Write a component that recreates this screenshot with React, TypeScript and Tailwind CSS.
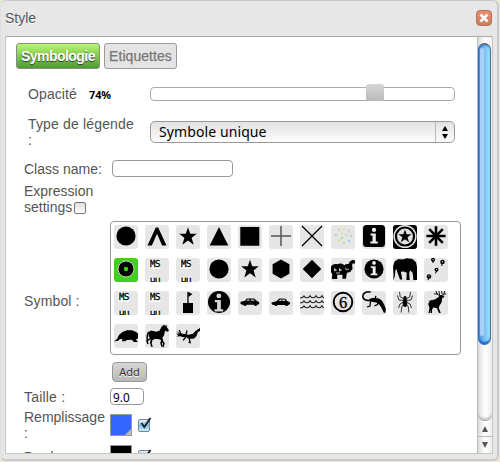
import type { ReactNode } from 'react';

const STAR = 'M12 3.5l2.1 6.1h6.3l-5.1 3.9 2 6.4-5.3-3.9-5.3 3.9 2-6.4-5.1-3.9h6.3z';

function Tile({ children, selected = false }: { children: ReactNode; selected?: boolean }) {
  return (
    <div className={`h-6 w-6 overflow-hidden rounded-[3px] ${selected ? 'bg-[#43d01c]' : 'bg-[#e6e6e6]'}`}>
      {children}
    </div>
  );
}

function Glyph({ children }: { children: ReactNode }) {
  return (
    <svg viewBox="0 0 24 24" className="block h-6 w-6" fill="#000">
      {children}
    </svg>
  );
}

function MapLabel() {
  return (
    <div className="flex flex-col items-start pt-[2px] pl-[4px] font-['DejaVu_Sans_Mono',monospace] text-[9px] leading-[9px] tracking-[-0.4px] text-black [-webkit-text-stroke:0.3px_#000]">
      <span className="h-[9px] bg-white pl-[1px]">MS</span>
      <span className="mt-[9px] h-[9px] bg-white pl-[1px]">HU</span>
    </div>
  );
}

const info = (
  <>
    <circle cx="12" cy="5.4" r="2.1" />
    <path d="M8.5 9h5.3v8h2v2H8.3v-2h2.2v-6H8.5z" />
  </>
);

const symbols: ReactNode[] = [
  <circle cx="12" cy="11" r="9.6" />,
  <path d="M2.5 20.5L10.8 2.5h2.4l8.3 18h-4.4L12 8.8 6.9 20.5z" />,
  <path d="M12 2.2l2.2 6.5h6.6l-5.2 4.1 2.1 7-5.7-4.2-5.7 4.2 2.1-7-5.2-4.1h6.6z" />,
  <path d="M12 2L21.3 20.5H2.7z" />,
  <path d="M2.3 2h19v18.7h-19z" />,
  <path d="M12 1v20M2 11h20" stroke="#555" strokeWidth="1.5" />,
  <path d="M2 1l20 20M22 1L2 21" stroke="#000" strokeWidth="1.3" />,
  <g>
    <circle cx="8" cy="5" r="1.2" fill="#c3dba0" />
    <circle cx="13" cy="4" r="1.3" fill="#d8e3a0" />
    <circle cx="18" cy="6" r="1.2" fill="#bdd8cb" />
    <circle cx="20" cy="11" r="1.3" fill="#bbd8b6" />
    <circle cx="18" cy="16" r="1.3" fill="#a8cbe2" />
    <circle cx="13" cy="18" r="1.2" fill="#c9dd9c" />
    <circle cx="8" cy="15.5" r="1.3" fill="#e0df91" />
    <circle cx="5" cy="10" r="1.3" fill="#afd0e0" />
    <circle cx="11" cy="8" r="1.2" fill="#e7e2a0" />
    <circle cx="15.5" cy="10" r="1.2" fill="#c5dfac" />
    <circle cx="11" cy="13" r="1.2" fill="#b8d8bd" />
  </g>,
  <g>
    <rect x="1" y="0" width="22" height="22" rx="3.5" />
    <g fill="#eee" transform="translate(0 -.5)">{info}</g>
  </g>,
  <g>
    <path d="M0 0h24v24H0z" />
    <circle cx="12" cy="11.5" r="11.6" fill="#e0e0e0" />
    <circle cx="12" cy="11.5" r="9" fill="#e0e0e0" stroke="#000" strokeWidth="2.2" />
    <path d={STAR} transform="translate(2.6 1.8) scale(.78)" />
  </g>,
  <path d="M12 1.2v19.6M2.4 11h19.2M5.2 4.2l13.6 13.6M18.8 4.2L5.2 17.8" stroke="#000" strokeWidth="2.6" />,
  <g>
    <circle cx="12" cy="11" r="8" fill="#000" stroke="#b5dfa6" strokeWidth="1" />
    <circle cx="12" cy="11" r="2.2" fill="#43d01c" />
  </g>,
  null,
  null,
  <circle cx="12" cy="11" r="9.6" />,
  <path d="M12 1.8l2.2 6.5h6.6l-5.2 4.1 2.1 7-5.7-4.2-5.7 4.2 2.1-7-5.2-4.1h6.6z" />,
  <path d="M12 1.5l8.4 4.8v9.5L12 20.6l-8.4-4.8V6.3z" />,
  <path d="M12 1.8l9.3 9.2-9.3 9.2L2.7 11z" />,
  <g>
    <path d="M0 8.5C1.5 6.2 4 5.6 6.5 6.2 8.3 5 11.4 5.3 13.4 7.2l1.1-.9 3.1-.2 1.2-2.6 2.8-1.4 2.3.2.1 3.1-2.5.2-.4 2 .5 3.2-2.4 3.3-3.3.7-.9 5.9h-3.6v-4H6.2V21H1l.2-5L0 14z" />
    <path d="M3.5 10.5l2 1.8-2 .7zm5 0l2 1.8-2 .7zM5 15h4" stroke="#e6e6e6" strokeWidth=".8" fill="none" />
    <path d="M14.5 9.5l1.2 2.5 2.1-1" stroke="#e6e6e6" strokeWidth=".8" fill="none" />
  </g>,
  <g>
    <circle cx="12" cy="11" r="9.6" />
    <g fill="#eee" transform="translate(1.2 .1) scale(.9)">{info}</g>
  </g>,
  <path d="M.3 22.5l.2-6L0 8.5 1.6 3.6 5.4 1l4 .4L14 .2l5.5.9L23 4.2 24 9v13h-3.6l-.9-7.6-2.4-2.2-.9 3.3.5 6.5h-3.3l.3-7.2-2.8-1.3-3 .3 1.4 7.8H7l-2.6-7.2-.9-3.3-1.1 1.4-.6 5.8z" />,
  <g>
    <circle cx="9" cy="1.8" r="2" />
    <path d="M9 2v3" stroke="#000" />
    <circle cx="18.5" cy="4" r="2.3" />
    <path d="M18.5 5l-1 3M12.5 13l-1 2.5M5 19l-1 3" stroke="#000" />
    <circle cx="12.5" cy="11.7" r="2" />
    <circle cx="5" cy="18.5" r="2.3" />
    <path d="M18.5 3v1.3M12.5 11v1M5 17.5v1.2M9 1v1" stroke="#ddd" />
  </g>,
  null,
  null,
  <g>
    <path d="M7 12h10v10H7zM11.3 1h1.3v12h-1.3z" />
    <path d="M12 1l4.5 2-4 3z" />
  </g>,
  <g>
    <circle cx="12" cy="11" r="11" />
    <g fill="#d5d5d5" transform="translate(-2 -1.3) scale(1.15)">{info}</g>
  </g>,
  <g>
    <path d="M2.6 10.8l4-.8L8.9 7.4h7.3l2.8 2.5 2 1 .3 2.2-2 .6H4l-1.5-1z" />
    <circle cx="7" cy="13.3" r="1.7" />
    <circle cx="17.6" cy="13.3" r="1.7" />
    <path d="M8.4 9.8l1.3-1.4h1.6v1.4zm4.6 0V8.4h2.3l1.6 1.4zM10.5 12h4" fill="#bbb" stroke="#999" strokeWidth=".3" />
  </g>,
  <g>
    <path d="M2.6 11.4l4.8-1.1 3-2.7 6.2.1 1.5 2.4 2.4.9.8 2.1-2 .8H4l-1.4-1z" />
    <circle cx="7" cy="13.5" r="1.5" />
    <circle cx="17.5" cy="13.5" r="1.6" />
    <path d="M9.5 10l1.7-1.4h1.3V10zm3.9 0V8.6h2.3l.8 1.4z" fill="#d5d5d5" />
  </g>,
  <g fill="none" stroke="#222" strokeWidth="1.1">
    {[6, 11, 16].map((y) => (
      <path key={y} d={`M0 ${y + 1}q3 0 4-2 1 2 3 1.7 2 0 3-1.9 1 2 3 1.9 2 0 3-1.9 1 2 3 1.9 2 0 3-1.9 1 2 2 1.9`} />
    ))}
  </g>,
  <g>
    <circle cx="12" cy="11" r="9.3" fill="none" stroke="#000" strokeWidth="1.9" />
    <text x="12" y="16.5" textAnchor="middle" fontFamily="Liberation Serif, serif" fontSize="16.5" stroke="#000" strokeWidth=".3">6</text>
  </g>,
  <g>
    <path d="M8.6 1.3C5.2-.1.8 2 .8 5.2c0 3.7 4.6 5 9.1 3.7" fill="none" stroke="#000" strokeWidth="1.5" />
    <path d="M8 7.5l5-.8 4.6 1 2.4 2 2.3 4 1.5 4-.3 4h-1.7l-1.8-4-2.5-4-3.2-2.2-4.8-.7-3-1z" />
    <path d="M8.5 10l-.5 5-3 1M17 9.5l-1.5 4-3 1.3M13.3 8l.5-3.1" fill="none" stroke="#000" strokeWidth="1.3" />
  </g>,
  <g>
    <ellipse cx="12" cy="11.5" rx="2.3" ry="4.5" />
    <circle cx="12" cy="6.8" r="1.7" />
    <path d="M11 8L7.2 5.8 6.5 1M13 8l3.8-2.2.7-4.8M10.8 9.5L6 9 4.5 4.5M13.2 9.5L18 9l1.5-4.5M10.8 11L7 13l-1.5 4M13.2 11l3.8 2 1.5 4M11 12.5l-2.3 3.5-.5 5.5M13 12.5l2.3 3.5.5 5.5" fill="none" stroke="#222" strokeWidth=".9" />
  </g>,
  <g>
    <path d="M4.5 22l1-5-1.3-4 1.6-3.4 5-1.1 3.8-2.4 1.3-2 3.6.3 1 1.5-2.3 1.1-.7 4.5-2 3-.7 2.5 2 5h-1.8l-2.3-5-3.4-.5-1.2 2L8 22H6.5l.2-3.5L5.8 22z" />
    <path d="M16 5l-3-2-1-3M14 3l-4-.2M17 5l3-2 .7-3M19.4 3h2.8M15.5 4L15 0M18 3l-.3-3" fill="none" stroke="#000" strokeWidth=".9" />
  </g>,
  <path d="M0 17.5l3-2.6 2-3.8 3.4-3.2L13 6.2l5 .1 3.6 1.5L24 9.4v5l-2.2 1 2.2 2.6h-4.2l-2-2.3-5 .2-1.4 1.4H7.8l.8-2-2.4-.3-2.1 1.7z" />,
  <g>
    <path d="M3.2 8.6L6 6.5l5.3 1.2 3.4-1.2 2-4L19 .7l1.4 1 1.1-.7.2 2 2.3 3.6-1.4 1.1-2.5-1-1.2 4.8-1.6 2.4.4 2.3 2 3-1 4-1.5-.3.8-3.1-2.7-4.2-4.5-.9-3.3 1.4-.8 3.2 1.1 3.5H6.2l-1.2-4 .8-4.3L4 13z" />
    <path d="M4.5 8Q1.5 9 2.3 17M17.5 15l-1.5 4 1 3.5M6 14l-4 3 1 3" fill="none" stroke="#000" strokeWidth="1.5" />
  </g>,
  <g>
    <path d="M0 6.8l3.7 2.5 4.7.6 4.2.8 4.4-1 2.4-2.6L24 4v2.8l-2.2 1.4-1.4 4.1-2.7 2.5-4.7-.1-3-1.6-2.6.2-3.3-1L.3 12.6l2-1.3L0 9.5l3 .4z" />
    <path d="M5 10L3.2 6M10 10.5l1-4M10 13l-3 3.4M13 13.5l1.4 5.8M12.5 18.5l2-1" fill="none" stroke="#000" strokeWidth="1.3" />
  </g>,
];

const labels = [12, 13, 22, 23];

function CheckedBox() {
  return (
    <div className="ml-[6px] flex h-[13px] w-[12px] items-center rounded-[2px] border border-[#7b8290] bg-linear-to-b from-[#e8f4ff] via-[#83bfeb] to-[#c7f3fc]">
      <svg viewBox="0 0 13 13" className="-mt-[3px] h-[13px] w-[13px] shrink-0" fill="none">
        <path d="M2.5 6l2.8 4L11.5 1" stroke="#1b2630" strokeWidth="2" />
      </svg>
    </div>
  );
}

function ColorSwatch({ color }: { color: string }) {
  return (
    <div className={`flex h-[22px] w-[22px] shrink-0 items-end justify-end border border-[#999] ${color}`}>
      <svg viewBox="0 0 6 6" className="h-[6px] w-[6px]"><path d="M6 0v6H0z" fill="#bbb" /></svg>
    </div>
  );
}

export default function App() {
  return (
    <div className="h-[462px] w-[500px] overflow-hidden bg-[#ede8d3] font-['Liberation_Sans',Arial,sans-serif] text-[14px] leading-4 text-[#555]">
      <div className="flex h-[461px] w-[499px] flex-col rounded-[6px] border border-r-2 border-b-2 border-[#cbcbcb] border-l-[#e0e0e0] bg-[#e7e7e7] pr-[4px] pl-[4px]">
        <header className="flex h-[35px] shrink-0 items-center justify-between pr-[1px]">
          <h1 className="-mt-[2px] [text-shadow:0_1px_0_#fff]">Style</h1>
          <button className="-mt-[2px] flex h-4 w-4 items-center justify-center rounded-[4px] border border-[#b56f5b] bg-linear-to-b from-[#ec8c6b] to-[#c9805b]">
            <svg viewBox="0 0 10 10" className="h-[10px] w-[10px]"><path d="M1.5 1.5l7 7M8.5 1.5l-7 7" stroke="#fff" strokeWidth="2.5" /></svg>
          </button>
        </header>

        <div className="flex h-[418px] w-[488px] shrink-0 border border-[#c6c6c6] border-t-[#aaa] bg-white">
          <main className="h-[416px] w-[471px] shrink-0 overflow-hidden">
            <nav className="flex gap-[4px] pt-[6px] pl-[10px]">
              <button className="h-[26px] w-[84px] rounded-[3px] border border-[#8a8a8a] bg-linear-to-b from-[#b9f871] to-[#4b9d2d] font-bold tracking-[-0.55px] text-white [text-shadow:0_1px_1px_#333]">Symbologie</button>
              <button className="h-[26px] w-[73px] rounded-[3px] border border-[#999] bg-[#e4e4e4] tracking-[0.05px] text-[#777] [-webkit-text-stroke:0.25px_#777]">Etiquettes</button>
            </nav>

            <div className="flex h-[44px] items-center pt-[6px] pl-[22px]">
              <span className="w-[61px] tracking-[0.1px]">Opacité</span>
              <span className="w-[61px] pt-[1px] font-['Noto_Sans',sans-serif] text-[10.8px] font-bold text-black">74%</span>
              <div className="flex h-[14px] w-[305px] items-end rounded-[4px] border border-[#aaa] bg-white">
                <div className="-mb-[1px] ml-[215px] h-[17px] w-[18px] rounded-[3px] bg-linear-to-b from-[#d6d6d6] to-[#b9b9b9]" />
              </div>
            </div>

            <div className="flex h-[44px] pl-[22px]">
              <span className="w-[122px] pt-[3px] tracking-[0.16px]">Type de légende<br />:</span>
              <div className="mt-[8px] flex h-[22px] w-[305px] justify-between rounded-[5px] border border-[#999] bg-linear-to-b from-[#e2e2e2] to-[#fdfdfd] pl-[8px] font-['Noto_Sans',sans-serif] text-[14px] leading-[20px] tracking-[0.1px] text-black">
                <span>Symbole unique</span>
                <span className="flex w-[19px] items-center justify-center border-l border-[#bbb]">
                  <svg viewBox="0 0 6 13" className="h-[13px] w-[6px]"><path d="M3 0l3 5H0zM0 8h6l-3 5z" /></svg>
                </span>
              </div>
            </div>

            <div className="flex h-[20px] items-end pl-[18px]">
              <span className="w-[88px]">Class name:</span>
              <input aria-label="Class name" className="h-[17px] w-[121px] rounded-[4px] border border-[#999] bg-white" />
            </div>

            <div className="flex h-[44px] items-start pt-[6px] pl-[18px]">
              <div>
                Expression
                <div className="flex">settings<span className="mt-[3px] ml-[2px] h-[12px] w-[12px] rounded-[2px] border border-[#777] bg-linear-to-b from-[#ddd] to-white" /></div>
              </div>
            </div>

            <div className="flex h-[134px] items-center pl-[18px]">
              <span className="w-[86px] pt-[26px] tracking-[0.15px]">Symbol :</span>
              <div className="grid h-[134px] w-[351px] auto-rows-[24px] grid-cols-[repeat(11,24px)] gap-x-[7px] gap-y-[9px] rounded-[4px] border border-[#999] py-[3px] pl-[3px]">
                {symbols.map((art, i) => (
                  <Tile key={i} selected={i === 11}>
                    {labels.includes(i) ? <MapLabel /> : <Glyph>{art}</Glyph>}
                  </Tile>
                ))}
              </div>
            </div>

            <div className="flex h-[33px] items-center pl-[106px]">
              <button className="h-[20px] w-[35px] rounded-[4px] border border-[#999] bg-linear-to-b from-[#d6d6d6] to-[#b8b8b8] font-['Noto_Sans',sans-serif] text-[11px] leading-[17px] text-[#333] [text-shadow:0_1px_0_#fff]">Add</button>
            </div>

            <div className="flex h-[17px] items-center pl-[18px]">
              <span className="w-[86px] tracking-[0.2px]">Taille :</span>
              <span className="h-[17px] w-[34px] rounded-[4px] border border-[#999] pl-[2px] font-['Noto_Sans',sans-serif] text-[11.8px] leading-[16px] text-black">9.0</span>
            </div>

            <div className="flex h-[40px] pt-[4px] pl-[18px]">
              <span className="w-[86px]">Remplissage :</span>
              <div className="flex h-[32px] items-center"><ColorSwatch color="bg-[#3366ff]" /><CheckedBox /></div>
            </div>

            <div className="flex h-[30px] items-start pl-[18px]">
              <span className="w-[86px] pt-[4px]">Bordure :</span>
              <ColorSwatch color="bg-black" />
              <div className="pt-[5px]"><CheckedBox /></div>
            </div>
          </main>

          <aside className="flex h-[416px] w-[15px] shrink-0 flex-col border-l border-[#bbb] bg-linear-to-r from-[#dcdcdc] via-white to-[#eee]">
            <div className="mt-[6px] h-[302px] w-[13px] shrink-0 rounded-full border border-[#276bc0] border-t-[#555] border-r-[#52708d] bg-linear-to-r from-[#4a90e4] via-[#7dbcf2] to-[#9ee7ff] shadow-[inset_0_-3px_2px_-1px_#1465d0,inset_0_2px_2px_-1px_#2368bd]">
              <div className="mt-[4px] ml-[1px] h-[288px] w-[4px] rounded-full bg-[#b9dafb]/80" />
            </div>
            <div className="h-[76px] w-[14px] shrink-0 rounded-b-full border-b border-[#999] shadow-[inset_0_-2px_2px_#ccc]" />
            <div className="flex h-[16px] shrink-0 items-center justify-center border-b border-[#bbb]">
              <svg viewBox="0 0 6 6" className="h-[6px] w-[6px]"><path d="M3 0l3 6H0z" fill="#555" /></svg>
            </div>
            <div className="flex h-[16px] shrink-0 items-center justify-center">
              <svg viewBox="0 0 6 6" className="h-[6px] w-[6px]"><path d="M3 6l3-6H0z" fill="#555" /></svg>
            </div>
          </aside>
        </div>
      </div>
    </div>
  );
}
